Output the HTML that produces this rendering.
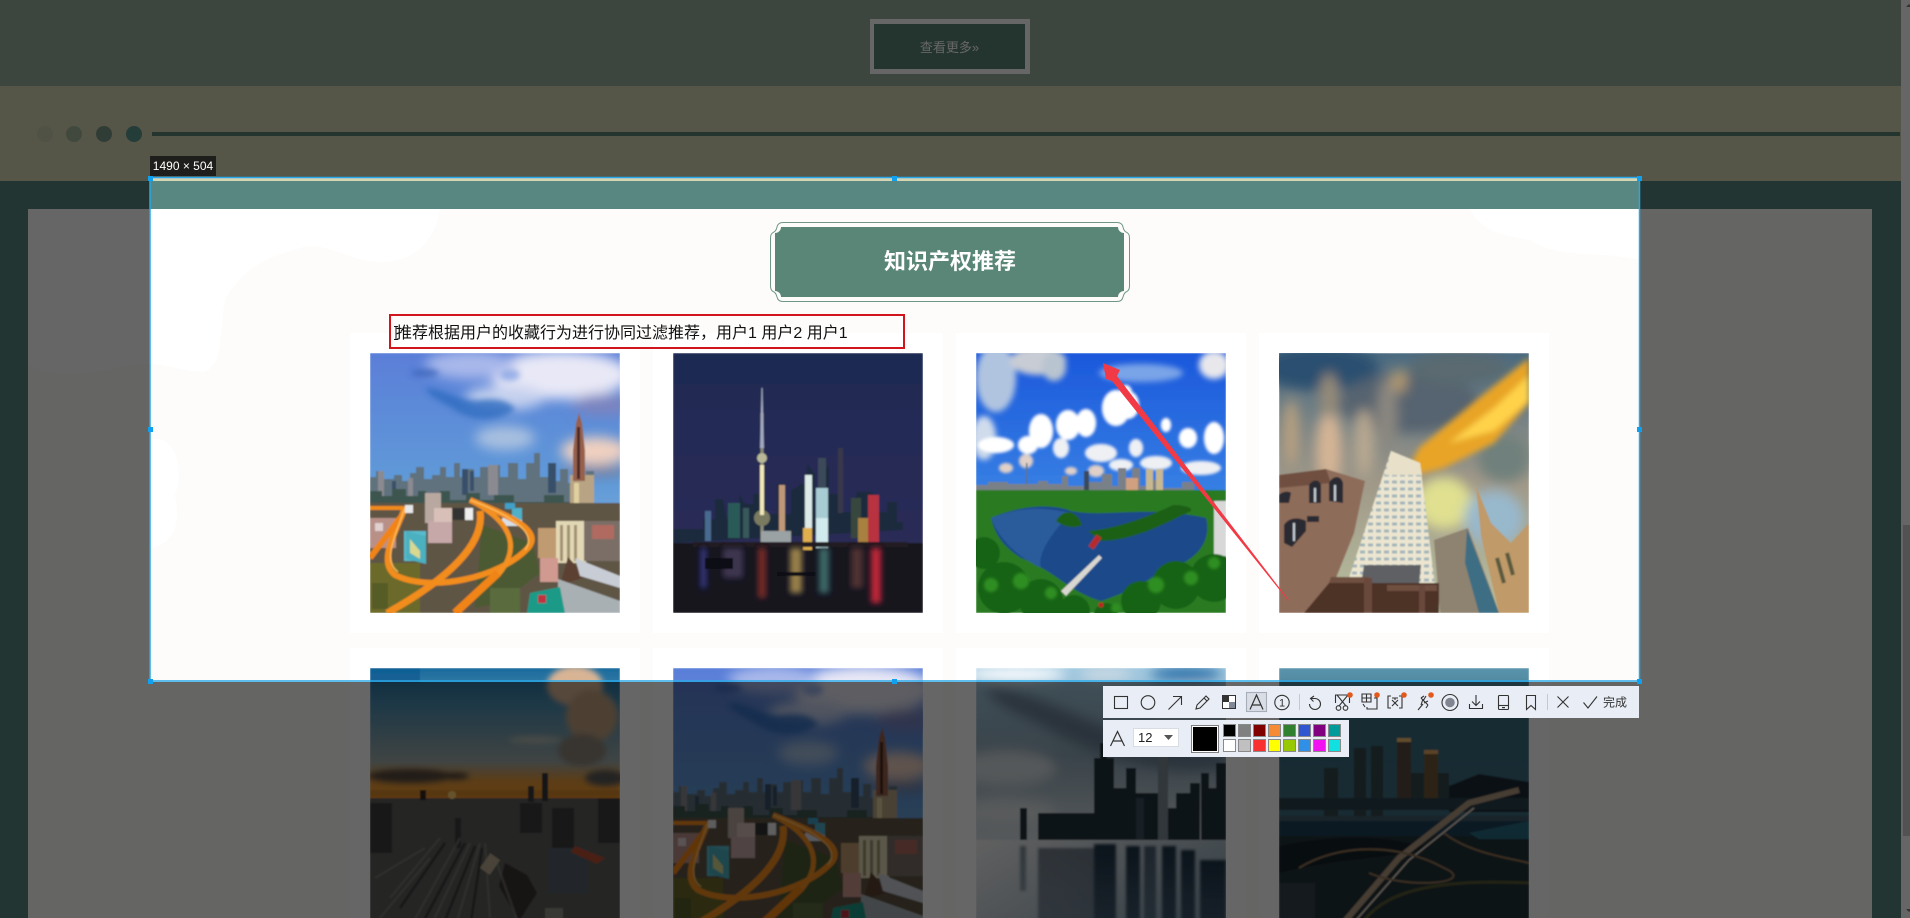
<!DOCTYPE html>
<html lang="zh"><head><meta charset="utf-8"><title>知识产权推荐</title>
<style>
html,body{margin:0;padding:0;width:1910px;height:918px;overflow:hidden;background:#588680}
body{position:relative;font-family:"Liberation Sans","Noto Sans CJK SC",sans-serif}
.a{position:absolute}
.img{position:absolute;width:250px;height:260px;overflow:hidden;display:block}
.card{position:absolute;width:290px;height:300px;background:#fff}
</style></head><body>
<svg width="0" height="0" style="position:absolute"><defs>
<filter id="b6" x="-30%" y="-30%" width="160%" height="160%"><feGaussianBlur stdDeviation="6"/></filter>
<filter id="b3" x="-30%" y="-30%" width="160%" height="160%"><feGaussianBlur stdDeviation="3"/></filter>
<filter id="b15" x="-10%" y="-10%" width="120%" height="120%"><feGaussianBlur stdDeviation="1.400"/></filter>
<filter id="b1" x="-5%" y="-5%" width="110%" height="110%"><feGaussianBlur stdDeviation="0.700"/></filter>
<linearGradient id="g1" x1="0" y1="0" x2="0" y2="1"><stop offset="0" stop-color="#5a7ed8"/><stop offset=".5" stop-color="#5f9ad8"/><stop offset="1" stop-color="#a3bedc"/></linearGradient>
<linearGradient id="g2" x1="0" y1="0" x2="0" y2="1"><stop offset="0" stop-color="#1d2b52"/><stop offset=".7" stop-color="#2a2c56"/><stop offset="1" stop-color="#3a3050"/></linearGradient>
<linearGradient id="g3" x1="0" y1="0" x2="0" y2="1"><stop offset="0" stop-color="#1b58dc"/><stop offset=".6" stop-color="#3a84e4"/><stop offset="1" stop-color="#b8cce0"/></linearGradient>
<linearGradient id="g4" x1="0" y1="0" x2="0" y2="1"><stop offset="0" stop-color="#4a6a80"/><stop offset=".5" stop-color="#a09888"/><stop offset="1" stop-color="#b8c0a0"/></linearGradient>
<linearGradient id="g5" x1="0" y1="0" x2="0" y2="1"><stop offset="0" stop-color="#1a6a9c"/><stop offset=".3" stop-color="#4f8fb0"/><stop offset=".72" stop-color="#a0aaa8"/><stop offset=".86" stop-color="#e09a40"/><stop offset="1" stop-color="#ff9a20"/></linearGradient>
<linearGradient id="g7" x1="0" y1="0" x2="0" y2="1"><stop offset="0" stop-color="#a0c8e0"/><stop offset=".5" stop-color="#90a8b8"/><stop offset="1" stop-color="#d8e0e4"/></linearGradient>
<linearGradient id="g8" x1="0" y1="0" x2="0" y2="1"><stop offset="0" stop-color="#5a94ac"/><stop offset=".2" stop-color="#3a6c80"/><stop offset="1" stop-color="#406878"/></linearGradient>
<linearGradient id="w7" x1="0" y1="0" x2="1" y2=".6"><stop offset="0" stop-color="#f0f0f0"/><stop offset="1" stop-color="#90a8b8"/></linearGradient>
<linearGradient id="r7" x1="0" y1="0" x2="0" y2="1"><stop offset="0" stop-color="#1c3044"/><stop offset="1" stop-color="#203a50" stop-opacity=".75"/></linearGradient>
<pattern id="win" width="8" height="7" patternUnits="userSpaceOnUse"><rect width="8" height="7" fill="#ece6d0"/><rect x="1" y="1.500" width="5" height="3" fill="#a0b4ba"/></pattern>

<symbol id="s1" viewBox="0 0 250 260"><g filter="url(#b1)">
<rect width="250" height="260" fill="url(#g1)"/>
<g filter="url(#b6)">
<ellipse cx="190" cy="22" rx="70" ry="24" fill="#e8e8f6"/><ellipse cx="100" cy="12" rx="45" ry="14" fill="#a8b8ea"/>
<ellipse cx="135" cy="45" rx="40" ry="12" fill="#c4d0ee"/><ellipse cx="232" cy="52" rx="30" ry="11" fill="#7a84c0"/>
<ellipse cx="225" cy="98" rx="34" ry="14" fill="#f0d0c0"/><ellipse cx="135" cy="85" rx="30" ry="12" fill="#a8c0e0"/>
<ellipse cx="225" cy="118" rx="34" ry="5" fill="#7a7c98"/></g>
<g filter="url(#b3)" opacity=".8"><path d="M55 35c20 0 35 15 55 12 15-2 30 0 35 10-20 14-45 10-60 0-12-8-25-12-30-22z" fill="#2f6cc0"/><ellipse cx="55" cy="20" rx="14" ry="4" fill="#3f68bc"/><ellipse cx="140" cy="22" rx="10" ry="6" fill="#8aa6e4"/></g>
<path d="M0 150V124h6v-6h8v8h10v-4h8v6h8v-8h6v-6h8v12h8v-4h8v-8h6v10h8v-14h6v14h8v-8h6v8h6v-10h8v10h8v-12h4v12h8v-14h10v16h8v-16h8v-10h6v24h12v4h8v-12h8v14h10v-6h8v-6h8v40z" fill="#60727e"/>
<g fill="#8a8a90"><rect x="8" y="118" width="6" height="28"/><rect x="38" y="125" width="5" height="20"/><rect x="118" y="112" width="10" height="30"/></g>
<g fill="#39506a"><rect x="92" y="116" width="6" height="26"/><rect x="100" y="118" width="4" height="20"/><rect x="178" y="110" width="8" height="30"/><rect x="22" y="128" width="4" height="16"/></g>
<path d="M0 152v-14h12v5h10v-7h14v7h12v-5h8v9h14v-9h10v9h16v-7h14v7h14v-5h20v7h30v-7h20v7h20v-7h10v30z" fill="#3e5450"/>
<rect x="200" y="122" width="24" height="44" fill="#b8a484"/><rect x="204" y="130" width="5" height="34" fill="#e0d0a0"/>
<path d="M203 128V98l3-28 3-10 3 10 3 28v30z" fill="#96604c"/><rect x="207" y="74" width="3" height="52" fill="#4a2820"/>
<rect y="150" width="250" height="110" fill="#5e5444"/>
<rect x="0" y="210" width="50" height="50" fill="#6c6a2a"/><rect x="55" y="140" width="16" height="30" fill="#b8a8a0"/><rect x="58" y="168" width="24" height="22" fill="#c6a8a8"/><rect x="64" y="155" width="18" height="14" fill="#d8c0b8"/>
<rect x="82" y="155" width="16" height="12" fill="#333"/><rect x="132" y="165" width="20" height="8" fill="#d8e0e8"/><rect x="142" y="155" width="10" height="12" fill="#50b0c8"/>
<path d="M112 172l50 18 8 30-40 30-25 5z" fill="#4c5a30"/><rect x="186" y="168" width="30" height="42" fill="#e2d8b6"/><g fill="#a09070"><rect x="190" y="172" width="3" height="36"/><rect x="197" y="172" width="3" height="36"/><rect x="204" y="172" width="3" height="36"/></g><rect x="168" y="175" width="18" height="30" fill="#c09a70"/>
<rect x="170" y="205" width="18" height="24" fill="#d09a90"/><rect x="214" y="168" width="36" height="40" fill="#7a6e66"/><rect x="222" y="172" width="22" height="14" fill="#b06a60"/><path d="M190 232l8-28 18 20z" fill="#5c4030"/><path d="M188 226l62 22v12h-62z" fill="#a8b0b4"/><path d="M205 205l45 18v12l-40-12z" fill="#c8ccd4"/>
<path d="M160 240l30-6 5 26h-38z" fill="#1f9a88"/><rect x="168" y="242" width="8" height="8" fill="#c03040"/><rect x="0" y="165" width="26" height="30" fill="#b89088"/><rect x="5" y="170" width="8" height="8" fill="#e0d0d0"/>
<rect x="34" y="178" width="22" height="30" fill="#58bccc"/><path d="M36 178l20 5v28l-20-5z" fill="#4cb0c0"/><path d="M40 186l10 12v8l-10-6z" fill="#d8d890"/>
<path d="M0 155H35" stroke="#f08a1c" stroke-width="4" fill="none"/>
<path d="M35 155C20 190 10 210 25 222 60 240 130 225 158 195 175 175 130 160 100 147" stroke="#f28c1c" stroke-width="6" fill="none"/>
<path d="M100 147C135 165 155 190 128 222" stroke="#f29020" stroke-width="5" fill="none"/>
<path d="M110 158C115 190 80 225 17 260" stroke="#f28c1c" stroke-width="7" fill="none"/>
<path d="M128 220L85 260" stroke="#f08418" stroke-width="8" fill="none"/>
<path d="M0 205L30 165" stroke="#f08418" stroke-width="6" fill="none"/>
<path d="M35 155C22 190 14 208 28 219M100 147C135 160 170 178 155 197" stroke="#ffc060" stroke-width="1.300" fill="none"/>
<rect x="35" y="152" width="8" height="8" fill="#e8e8e8"/><rect x="95" y="155" width="8" height="12" fill="#eee"/><rect x="135" y="150" width="10" height="6" fill="#40a0c8"/><rect x="2" y="230" width="16" height="26" fill="#565c28"/><rect x="120" y="235" width="30" height="25" fill="#5a6c3c"/>
</g></symbol>

<symbol id="s2" viewBox="0 0 250 260"><g filter="url(#b1)">
<rect width="250" height="260" fill="url(#g2)"/>
<rect y="190" width="250" height="70" fill="#15151f"/>
<path d="M0 190v-14h30v-10h12v-20h8l4 20h12v-25l6 10h8v-10l10 0 4 20h10v-30h8v30h6v-24l8-4v-2h8v-20l8 10v40h8v-40l6-10v30h10v18h14l4-20h16v20h14v-10h10v20h6v8z" fill="#1a2c3c"/>
<rect x="87.500" y="60" width="3" height="130" fill="#8a8a78"/><path d="M88.500 35h1l1.500 60h-4z" fill="#a0a8c0"/><circle cx="89" cy="105" r="5" fill="#b8b898"/><circle cx="89" cy="165" r="8" fill="#7a7a60"/><rect x="87" y="112" width="4" height="50" fill="#f0e8b8"/>
<rect x="106" y="132" width="6" height="55" fill="#c09878"/><rect x="132" y="122" width="7" height="55" fill="#dcebe8"/><rect x="145" y="105" width="8" height="30" fill="#3a4a58"/><rect x="143" y="135" width="12" height="60" fill="#a8ccd4"/><rect x="143" y="165" width="12" height="30" fill="#d0eaee"/>
<rect x="165" y="95" width="5" height="65" fill="#383848"/><rect x="130" y="175" width="9" height="22" fill="#e0b050"/>
<rect x="195" y="142" width="11" height="50" fill="#b83040"/><rect x="178" y="145" width="10" height="40" fill="#38463e"/><rect x="185" y="165" width="10" height="25" fill="#a88040"/><rect x="32" y="158" width="6" height="30" fill="#4a6a90"/>
<rect x="55" y="150" width="12" height="35" fill="#2a5a58"/><rect x="88" y="178" width="30" height="14" fill="#9aa2a4"/><rect x="70" y="155" width="6" height="30" fill="#38585a"/>
<rect y="189" x="20" width="215" height="5" fill="#201a20"/>
<g filter="url(#b3)"><rect x="28" y="195" width="5" height="40" fill="#3a3a90"/><rect x="50" y="195" width="20" height="30" fill="#3c3450"/><rect x="85" y="195" width="8" height="50" fill="#7a2a28"/><rect x="117" y="195" width="12" height="45" fill="#98804a"/><rect x="146" y="195" width="10" height="45" fill="#3a6868"/><rect x="198" y="195" width="10" height="55" fill="#c02838"/><rect x="178" y="195" width="12" height="40" fill="#503030"/></g>
<rect x="32" y="205" width="28" height="11" fill="#0c0c12"/><rect x="104" y="219" width="38" height="4" fill="#0c0c12"/>
</g></symbol>

<symbol id="s3" viewBox="0 0 250 260"><g filter="url(#b1)">
<rect width="250" height="260" fill="url(#g3)"/>
<g filter="url(#b3)"><ellipse cx="20" cy="25" rx="20" ry="34" fill="#b0c4e0"/><ellipse cx="62" cy="8" rx="28" ry="14" fill="#c8ccd4"/><ellipse cx="78" cy="14" rx="12" ry="14" fill="#b8c4d0"/><ellipse cx="238" cy="12" rx="15" ry="14" fill="#e8e8ec"/><ellipse cx="165" cy="20" rx="42" ry="9" fill="#7aa4e8"/><ellipse cx="8" cy="85" rx="12" ry="22" fill="#d0dcec"/></g>
<g filter="url(#b15)"><g fill="#fff">
<ellipse cx="140" cy="55" rx="14" ry="18"/><ellipse cx="152" cy="52" rx="11" ry="14"/><ellipse cx="150" cy="40" rx="6" ry="8"/><ellipse cx="92" cy="72" rx="12" ry="15"/><ellipse cx="110" cy="70" rx="10" ry="14"/><ellipse cx="65" cy="78" rx="12" ry="17"/><ellipse cx="52" cy="92" rx="10" ry="9"/>
<ellipse cx="190" cy="72" rx="5" ry="7"/><ellipse cx="212" cy="85" rx="9" ry="10"/><ellipse cx="238" cy="85" rx="10" ry="16"/><ellipse cx="20" cy="92" rx="18" ry="8"/></g>
<g fill="#eef0f4"><ellipse cx="125" cy="100" rx="16" ry="9"/><ellipse cx="85" cy="95" rx="8" ry="10"/><ellipse cx="160" cy="95" rx="7" ry="9"/><ellipse cx="180" cy="110" rx="16" ry="7"/><ellipse cx="225" cy="115" rx="20" ry="7"/><ellipse cx="145" cy="112" rx="12" ry="6"/></g>
<g fill="#e0d0c8"><ellipse cx="50" cy="108" rx="7" ry="7"/><ellipse cx="30" cy="115" rx="7" ry="5"/><ellipse cx="120" cy="118" rx="8" ry="6"/><ellipse cx="95" cy="118" rx="6" ry="4"/></g></g>
<rect x="50" y="110" width="1.500" height="28" fill="#607080"/>
<path d="M0 140v-8h12v-3h20v2h30v-3h10v3h14v-8h6v10h20v-4h14v-8h10v12h6v-18h8v18h6v-18h8v18h12v-6h10v8h20v-6h12v10z" fill="#7a8088"/><rect x="150" y="125" width="12" height="16" fill="#d0a080"/><rect x="170" y="116" width="7" height="22" fill="#c8b890"/><rect x="180" y="116" width="7" height="22" fill="#c8b890"/><rect x="108" y="118" width="5" height="20" fill="#3a4a5a"/>
<rect y="137" width="250" height="123" fill="#2a7a22"/>
<path d="M15 165C50 150 80 152 95 158 130 165 170 152 230 165 235 185 225 205 195 215 170 228 150 240 125 248 95 240 75 215 45 205 30 195 20 185 15 165z" fill="#1a4a8a"/>
<path d="M15 165C50 152 70 155 95 160 80 175 60 200 65 215 45 205 25 190 15 165z" fill="#2c5c9c"/>
<path d="M80 168c8-14 22-10 26 4-8 4-18 2-26-4zM112 178c25-2 55-12 85-26 10 0 20 2 18 6-30 15-60 30-90 30z" fill="#1e6018"/>
<path d="M85 238l38-36 3 3-36 38z" fill="#d8d8d0"/><rect x="112" y="186" width="14" height="6" transform="rotate(-55 119 189)" fill="#b82c2c"/>
<rect x="238" y="148" width="12" height="55" fill="#d8d8d8"/>
<g fill="#186414"><circle cx="8" cy="200" r="16"/><circle cx="28" cy="235" r="26"/><circle cx="65" cy="248" r="22"/><circle cx="98" cy="258" r="16"/><circle cx="130" cy="262" r="12"/><circle cx="165" cy="248" r="20"/><circle cx="200" cy="232" r="24"/><circle cx="238" cy="225" r="24"/></g>
<g fill="#2f8e24" filter="url(#b15)"><circle cx="45" cy="228" r="8"/><circle cx="180" cy="232" r="8"/><circle cx="215" cy="225" r="7"/><circle cx="15" cy="232" r="7"/><circle cx="75" cy="240" r="6"/><circle cx="140" cy="255" r="5"/><circle cx="238" cy="210" r="6"/></g>
<circle cx="125" cy="252" r="2.500" fill="#c02020"/>
</g></symbol>

<symbol id="s4" viewBox="0 0 250 260"><g filter="url(#b1)">
<rect width="250" height="260" fill="url(#g4)"/>
<g filter="url(#b6)"><ellipse cx="40" cy="15" rx="60" ry="22" fill="#2a5070"/><ellipse cx="130" cy="50" rx="70" ry="30" fill="#566470"/><ellipse cx="180" cy="15" rx="50" ry="16" fill="#5a6a70"/><ellipse cx="50" cy="95" rx="13" ry="38" fill="#d4b494"/><ellipse cx="50" cy="42" rx="9" ry="22" fill="#988c78"/><ellipse cx="85" cy="90" rx="10" ry="34" fill="#b8a890"/><ellipse cx="108" cy="62" rx="10" ry="36" fill="#8c8880"/><ellipse cx="12" cy="80" rx="8" ry="34" fill="#b8a080"/><ellipse cx="120" cy="28" rx="8" ry="12" fill="#b09870"/>
<ellipse cx="225" cy="105" rx="26" ry="24" fill="#70807c"/><ellipse cx="165" cy="150" rx="28" ry="26" fill="#e0e090"/><ellipse cx="215" cy="165" rx="30" ry="28" fill="#98b8cc"/></g>
<g filter="url(#b3)"><path d="M250 5L200 45 140 95 125 125 165 115 215 90 250 50z" fill="#e8a428"/><path d="M250 22L215 55 170 90 215 78 250 48z" fill="#ffd24a"/></g>
<path d="M112 98L141 110 155 225 160 260H60L70 225z" fill="url(#win)"/>
<path d="M112 98L141 110 143 122 106 122z" fill="#e8e0c8"/>
<path d="M82 232h58l2-20H85z" fill="#5e6064"/>
<path d="M155 187L189 175 212 237 220 260H161z" fill="#8e8270"/><path d="M188 176L220 260H200L186 210z" fill="#3e6e84"/>
<path d="M197 133L212 170 232 190 250 170V260H220L202 183z" fill="#c09a68"/><path d="M218 205l7 25M228 200l6 22" stroke="#5a5a40" stroke-width="4"/>
<path d="M0 122L47 116 86 128 75 180 55 230 40 260H0z" fill="#8e6c5a"/><path d="M0 122L47 116 52 130 0 135z" fill="#705040"/>
<path d="M30 150v-18c4-6 10-6 12 0v18zM50 148v-18c4-8 12-8 14 0v20zM5 190v-18c5-8 15-8 22-4v10l-14 16zM28 163h12v6H28zM0 142c4-4 10-4 12-2l-2 10H0z" fill="#2a2a30"/>
<path d="M36 135v14M56 132v16M15 170v18" stroke="#c8d0d8" stroke-width="2"/>
<path d="M50 230H160V260H25z" fill="#4e3028"/><path d="M52 224H90v6H50zM108 232h50v6h-50z" fill="#6e5040"/>
<path d="M85 225h8v35H85zM140 232h6v28h-6z" fill="#6a4a3c"/>
</g></symbol>

<symbol id="s5" viewBox="0 0 250 260"><g filter="url(#b1)">
<rect width="250" height="130" fill="url(#g5)"/>
<rect x="0" width="50" height="14" fill="#0c5a90" opacity=".7"/>
<g filter="url(#b3)"><ellipse cx="205" cy="18" rx="28" ry="20" fill="#d8b494"/><ellipse cx="222" cy="48" rx="26" ry="26" fill="#c0a080"/><ellipse cx="212" cy="82" rx="24" ry="16" fill="#8c8478"/><ellipse cx="165" cy="72" rx="26" ry="3.500" fill="#b8bcb0"/>
<ellipse cx="40" cy="108" rx="42" ry="7" fill="#54463c"/><ellipse cx="85" cy="108" rx="14" ry="3.500" fill="#4a4038"/><ellipse cx="235" cy="110" rx="20" ry="8" fill="#585858"/></g>
<rect y="130" width="250" height="130" fill="#5c5c5a"/>
<rect y="122" x="0" width="250" height="7" fill="#c08030" opacity=".55"/>
<circle cx="82" cy="127" r="4" fill="#ffd070"/>
<rect x="172" y="105" width="6" height="28" fill="#303438"/><rect x="158" y="118" width="6" height="16" fill="#3a3a3a"/><rect x="50" y="122" width="6" height="10" fill="#302820"/>
<g fill="#3e3e3c"><rect x="0" y="135" width="22" height="50"/><rect x="85" y="150" width="6" height="30"/><rect x="150" y="135" width="22" height="30"/><rect x="182" y="140" width="22" height="45"/><rect x="228" y="130" width="22" height="45"/></g>
<path d="M135 195l22 12 10 18-18 28-20-35z" fill="#3a3030"/><rect x="178" y="180" width="40" height="45" fill="#54606a"/><path d="M205 178l30 12-8 6-26-12z" fill="#b85030"/>
<g stroke="#7e7e7a" stroke-width="2.500" opacity=".65"><path d="M40 260L90 170M60 260L100 175M85 260L110 175M20 230L70 170M120 250L115 175M5 210l50-30M150 260L125 190M10 250L60 190"/></g>
<g stroke="#333" stroke-width="2.500" opacity=".8"><path d="M50 260L95 175M72 260L105 178M100 260L112 180M30 240L75 175"/></g>
<rect x="115" y="188" width="12" height="18" fill="#b8a890" transform="rotate(35 122 195)"/><rect x="175" y="240" width="18" height="20" fill="#8c8c84"/>
</g></symbol>

<symbol id="s7" viewBox="0 0 250 260"><g filter="url(#b1)">
<rect width="250" height="175" fill="url(#g7)"/>
<g filter="url(#b6)"><ellipse cx="40" cy="6" rx="50" ry="7" fill="#fff"/><ellipse cx="210" cy="6" rx="36" ry="7" fill="#2a70a8"/><ellipse cx="130" cy="6" rx="26" ry="6" fill="#d0dce4"/><path d="M10 20C50 20 100 50 160 70 200 80 230 60 250 70V100C190 110 120 90 70 60 40 45 15 35 10 20z" fill="#6a8094"/><ellipse cx="30" cy="100" rx="50" ry="18" fill="#d4dce0"/><ellipse cx="30" cy="145" rx="50" ry="14" fill="#dce2e4"/><ellipse cx="220" cy="40" rx="40" ry="22" fill="#a8bccc"/></g>
<g fill="#20303e"><rect x="44" y="140" width="7" height="34"/><rect x="62" y="145" width="56" height="30"/><rect x="118" y="90" width="20" height="85"/><rect x="124" y="75" width="7" height="25"/><rect x="138" y="120" width="12" height="55"/><rect x="150" y="100" width="10" height="75"/><rect x="160" y="125" width="22" height="50"/><rect x="182" y="85" width="10" height="90"/><rect x="192" y="140" width="8" height="35"/><rect x="200" y="125" width="14" height="50"/><rect x="214" y="115" width="10" height="60"/><rect x="225" y="105" width="8" height="70"/><rect x="233" y="120" width="7" height="55"/><rect x="240" y="95" width="10" height="80"/></g>
<rect x="182" y="85" width="10" height="90" fill="#7a8a94"/><rect x="160" y="130" width="8" height="45" fill="#3a4c5a"/>
<rect y="172" width="250" height="88" fill="url(#w7)"/>
<g filter="url(#b15)" fill="url(#r7)"><rect x="44" y="178" width="6" height="45" opacity=".5"/><rect x="62" y="180" width="56" height="80" opacity=".55"/><rect x="118" y="176" width="22" height="84"/><rect x="150" y="178" width="14" height="82"/><rect x="168" y="178" width="12" height="82" opacity=".7"/><rect x="186" y="178" width="14" height="82"/><rect x="205" y="182" width="14" height="78"/><rect x="224" y="192" width="26" height="68"/></g>
</g></symbol>

<symbol id="s8" viewBox="0 0 250 260"><g filter="url(#b1)">
<rect width="250" height="260" fill="url(#g8)"/>
<rect y="148" width="250" height="112" fill="#243238"/>
<g fill="#32464e"><rect x="45" y="100" width="14" height="50"/><rect x="75" y="80" width="12" height="68"/><rect x="92" y="78" width="12" height="70"/><rect x="130" y="105" width="40" height="25"/></g>
<rect x="118" y="70" width="14" height="72" fill="#584a40"/><rect x="145" y="82" width="14" height="50" fill="#6e5838"/><rect x="118" y="70" width="14" height="4" fill="#f0c070"/><rect x="145" y="82" width="14" height="4" fill="#e0a860"/>
<path d="M170 118l30-12 50 8v30h-80z" fill="#1a2c34"/><rect y="130" x="0" width="250" height="12" fill="#2c4048"/>
<rect y="148" width="250" height="20" fill="#1a4058"/><rect x="0" y="148" width="250" height="5" fill="#3c5a68"/><path d="M190 165l60-12v18h-50z" fill="#2a6a80"/>
<path d="M0 178C60 165 110 168 150 180 120 190 60 190 0 205z" fill="#16242a"/>
<path d="M60 260L120 190 190 135 240 122" stroke="#b09880" stroke-width="6" fill="none"/>
<path d="M70 260L130 192 195 140" stroke="#e8d8c8" stroke-width="1.500" fill="none"/>
<path d="M20 200C60 175 120 175 165 200 200 215 130 222 90 205M165 165C190 185 230 190 250 195" stroke="#8e7254" stroke-width="2" fill="none"/>
<path d="M80 260C100 225 150 210 250 215" stroke="#565a30" stroke-width="3" fill="none"/><rect x="0" y="215" width="36" height="45" fill="#34424e"/>
</g></symbol>
</defs></svg>

<!-- page base -->
<div class="a" style="left:0;top:0;width:1910px;height:86px;background:#96ad9b"></div>
<div class="a" style="left:870px;top:19px;width:151px;height:45px;border:5px solid #fff;border-width:5px 5px 5px 4px;background:#5a8678;color:#fff;font-size:13px;line-height:47px;text-align:center">查看更多»</div>
<div class="a" style="left:0;top:86px;width:1910px;height:95px;background:#d5d5b4"></div>
<div class="a" style="left:37px;top:126px;width:16px;height:16px;border-radius:50%;background:#5a8678;opacity:.1"></div>
<div class="a" style="left:66px;top:126px;width:16px;height:16px;border-radius:50%;background:#5a8678;opacity:.4"></div>
<div class="a" style="left:96px;top:126px;width:16px;height:16px;border-radius:50%;background:#5a8678;opacity:.75"></div>
<div class="a" style="left:126px;top:126px;width:16px;height:16px;border-radius:50%;background:#5a9a90"></div>
<div class="a" style="left:152px;top:132px;width:1748px;height:4px;background:#5a8678"></div>

<div class="a" style="left:28px;top:209px;width:1844px;height:709px;background:#fdfcfa;overflow:hidden">
<svg class="a" style="left:0;top:0" width="1844" height="709" viewBox="28 209 1844 709">
<path d="M28 209H440C436 235 420 262 380 262 350 262 325 240 300 248 280 254 245 262 225 300 218 340 225 360 205 372 180 372 160 360 130 365 90 372 60 380 28 365z" fill="#fff"/>
<path d="M150 440C175 432 185 470 175 495 182 530 170 545 150 548z" fill="#fff"/>
<path d="M1470 209H1640V260C1600 250 1560 260 1530 240 1500 235 1480 230 1470 209z" fill="#fff"/>
</svg></div>

<svg class="a" style="left:760px;top:215px" width="380" height="95" viewBox="760 215 380 95">
<path d="M783 222.500H1117Q1122 222.500 1123 227Q1124 231.500 1127 232.500Q1129.500 234 1129.500 238V286Q1129.500 290 1127 291.500Q1124 292.500 1123 297Q1122 301.500 1117 301.500H783Q778 301.500 777 297Q776 292.500 773 291.500Q770.500 290 770.500 286V238Q770.500 234 773 232.500Q776 231.500 777 227Q778 222.500 783 222.500Z" fill="#fdfcfa" stroke="#6f9688"/>
<path d="M781 227H1118A6 6 0 0 0 1124 233V291A6 6 0 0 0 1118 297H781A6 6 0 0 0 775 291V233A6 6 0 0 0 781 227Z" fill="#5a8678"/>
</svg>
<div class="a" style="left:770px;top:247px;width:360px;height:30px;line-height:30px;text-align:center;color:#fff;font-weight:bold;font-size:22px">知识产权推荐</div>

<div class="card" style="left:350px;top:333px"></div><div class="card" style="left:653px;top:333px"></div><div class="card" style="left:956px;top:333px"></div><div class="card" style="left:1259px;top:333px"></div>
<div class="card" style="left:350px;top:648px"></div><div class="card" style="left:653px;top:648px"></div><div class="card" style="left:956px;top:648px"></div><div class="card" style="left:1259px;top:648px"></div>

<div class="a" style="left:396px;top:322px;height:24px;line-height:24px;font-size:16px;color:#111;white-space:nowrap;z-index:2">推荐根据用户的收藏行为进行协同过滤推荐，用户1 用户2 用户1</div>

<svg class="img" style="left:370px;top:353px"><use href="#s1" width="250" height="260"/></svg>
<svg class="img" style="left:673px;top:353px"><use href="#s2" width="250" height="260"/></svg>
<svg class="img" style="left:976px;top:353px"><use href="#s3" width="250" height="260"/></svg>
<svg class="img" style="left:1279px;top:353px"><use href="#s4" width="250" height="260"/></svg>
<svg class="img" style="left:370px;top:668px"><use href="#s5" width="250" height="260"/></svg>
<svg class="img" style="left:673px;top:668px"><use href="#s1" width="250" height="260"/></svg>
<svg class="img" style="left:976px;top:668px"><use href="#s7" width="250" height="260"/></svg>
<svg class="img" style="left:1279px;top:668px"><use href="#s8" width="250" height="260"/></svg>

<!-- dim overlay outside the selection -->
<div class="a" style="left:150px;top:178px;width:1490px;height:504px;box-shadow:0 0 0 2000px rgba(0,0,0,.6);z-index:3"></div>

<!-- scrollbar -->
<div class="a" style="left:1901px;top:0;width:9px;height:918px;background:#666;z-index:4"></div>
<div class="a" style="left:1903px;top:525px;width:7px;height:311px;background:#525252;z-index:4"></div>
<div class="a" style="left:1906px;top:4px;width:0;height:0;border:3px solid transparent;border-bottom-color:#333;border-top:0;z-index:4"></div>
<div class="a" style="left:1906px;top:909px;width:0;height:0;border:3px solid transparent;border-top-color:#333;border-bottom:0;z-index:4"></div>

<!-- annotations and selection frame -->
<div class="a" style="left:389px;top:314px;width:512px;height:31px;border:2px solid #d2141c;z-index:5"></div>
<svg class="a" style="left:0;top:0;z-index:5" width="1910" height="918">
<polygon points="1103,363 1120,370 1117,376 1288.800,600 1288,600.500 1112,381 1106,379" fill="#f23a46"/>
<path d="M394 326h4v1h-1.500v12h1.500v1h-4v-1h1.500v-12h-1.500z" fill="#111"/>
<rect x="150" y="177.500" width="1489.500" height="503.500" fill="none" stroke="#28a8e8" stroke-width="1.500"/>
<g fill="#0fa0f0"><rect x="148" y="176" width="5" height="5"/><rect x="892" y="176" width="5" height="5"/><rect x="1637" y="176" width="5" height="5"/><rect x="148" y="427" width="5" height="5"/><rect x="1637" y="427" width="5" height="5"/><rect x="148" y="679" width="5" height="5"/><rect x="892" y="679" width="5" height="5"/><rect x="1637" y="679" width="5" height="5"/></g>
</svg>
<div class="a" style="left:150px;top:156px;width:66px;height:20px;background:#1e1e1c;color:#fff;font-size:12px;line-height:20px;text-align:center;z-index:5;white-space:nowrap">1490 × 504</div>

<!-- toolbars -->
<div class="a" style="left:1103px;top:686px;width:536px;height:32px;background:#e9edf5;z-index:6"></div>
<div class="a" style="left:1103px;top:720px;width:246px;height:37px;background:#e9edf5;z-index:6"></div>
<svg class="a" style="left:1100px;top:684px;z-index:7" width="540" height="76" viewBox="1100 684 540 76">
<g fill="none" stroke="#333" stroke-width="1.100">
<rect x="1114.500" y="696.500" width="13" height="12"/>
<circle cx="1148" cy="702.500" r="6.800"/>
<path d="M1168.500 709.500L1181.500 696.500M1173 696.500H1181.500V705"/>
<path d="M1196 709l1-4 9-9 3 3-9 9zM1204 698l3 3"/>
<rect x="1246.500" y="692.500" width="20" height="19" fill="#d8dde6" stroke="#a8aeb8"/>
<path d="M1250 709.500L1256.500 695 1263 709.500M1252 705h9" stroke-width="1.200"/>
<circle cx="1282" cy="702.500" r="7.200"/>
<path d="M1314 696l-3.500 2.500 3 3M1311 698.500h4a5.500 5.500 0 1 1-5.500 5.500"/>
<path d="M1335.500 703v-8h14v8M1337 695l9 11M1348 695l-9 11"/><circle cx="1338.500" cy="708" r="2.300"/><circle cx="1345.500" cy="708" r="2.300"/>
<path d="M1362 694h9v8h-9zM1366.500 694v8M1362 698h9M1363 704l2 3M1374 698h3v11h-10v-2"/>
<path d="M1391 696h-3v12h3M1399 696h3v12h-3M1392 698h6M1395 698v2M1392 700l6 6M1398 700l-6 6"/>
<path d="M1418 710l5-6M1421 698l7 7M1426 696l-3 5M1424 703l4-2M1423 699l-2 6M1421 698l3-2M1428 705l-2 3"/>
<circle cx="1450" cy="702.500" r="8"/>
<path d="M1476 695v10M1472 701.500l4 4 4-4M1469.500 704v4.500h13V704"/>
<rect x="1498.500" y="695.500" width="10" height="14" rx="1"/><path d="M1498.500 705.500h10"/>
<path d="M1526.500 695.500h9v14l-4.500-4-4.500 4z"/>
<path d="M1557.500 696.500l11 11M1568.500 696.500l-11 11"/>
<path d="M1583.500 702.500l4.500 5.500 9-11.500"/>
</g>
<rect x="1222.500" y="695.500" width="13" height="13" fill="#fff" stroke="#333"/>
<rect x="1223" y="696" width="6" height="6" fill="#333"/><rect x="1229" y="702" width="6" height="6" fill="#808898"/>
<circle cx="1450" cy="702.500" r="4.800" fill="#808590"/><rect x="1502" y="707" width="3" height="1.200" fill="#333"/>
<path d="M1299.500 694v16M1547.500 694v16" stroke="#c4c8d0"/>
<g fill="#e2591e"><circle cx="1350" cy="695" r="2.800"/><circle cx="1377" cy="695" r="2.800"/><circle cx="1404" cy="695" r="2.800"/><circle cx="1431" cy="695" r="2.800"/></g>
<text x="1282" y="706.500" font-size="11" text-anchor="middle" fill="#333" font-family="Liberation Sans,sans-serif">1</text>
<text x="1603" y="706.500" font-size="12" fill="#333" font-family="Liberation Sans,Noto Sans CJK SC,sans-serif">完成</text>

<path d="M1110.500 746L1117.500 731.500 1124.500 746M1113 741h9" fill="none" stroke="#333" stroke-width="1.200"/>
<rect x="1133.500" y="728.500" width="45" height="18" fill="#fff" stroke="#d8dce4"/>
<text x="1138" y="742" font-size="13" fill="#222" font-family="Liberation Sans,sans-serif">12</text>
<polygon points="1164,735 1173,735 1168.500,740" fill="#555"/>
<rect x="1191.500" y="725.500" width="27" height="27" fill="#fff" stroke="#808080"/><rect x="1193" y="727" width="24" height="24" fill="#000"/>
<g stroke="#8a8a8a" stroke-width="1">
<rect x="1223.500" y="724.500" width="12" height="12" fill="#000"/><rect x="1238.500" y="724.500" width="12" height="12" fill="#808080"/><rect x="1253.500" y="724.500" width="12" height="12" fill="#800000"/><rect x="1268.500" y="724.500" width="12" height="12" fill="#f68b35"/><rect x="1283.500" y="724.500" width="12" height="12" fill="#318030"/><rect x="1298.500" y="724.500" width="12" height="12" fill="#3055d0"/><rect x="1313.500" y="724.500" width="12" height="12" fill="#800080"/><rect x="1328.500" y="724.500" width="12" height="12" fill="#009a9a"/>
<rect x="1223.500" y="739.500" width="12" height="12" fill="#fff"/><rect x="1238.500" y="739.500" width="12" height="12" fill="#c0c0c0"/><rect x="1253.500" y="739.500" width="12" height="12" fill="#f83030"/><rect x="1268.500" y="739.500" width="12" height="12" fill="#ffff00"/><rect x="1283.500" y="739.500" width="12" height="12" fill="#98c800"/><rect x="1298.500" y="739.500" width="12" height="12" fill="#3090e8"/><rect x="1313.500" y="739.500" width="12" height="12" fill="#f010f0"/><rect x="1328.500" y="739.500" width="12" height="12" fill="#10e0e0"/>
</g>
</svg>
</body></html>
